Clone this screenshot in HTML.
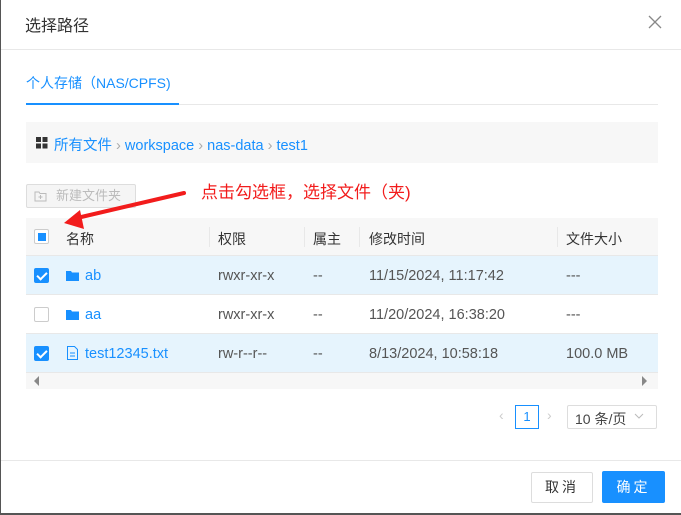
<!DOCTYPE html>
<html><head><meta charset="utf-8"><style>
*{box-sizing:border-box;margin:0;padding:0}
body{width:681px;height:515px;background:#fff;font-family:"Liberation Sans","Noto Sans CJK SC",sans-serif;font-size:14px;color:#333;position:relative;overflow:hidden;border-left:1px solid #555;border-bottom:2px solid #555}
.a{position:absolute}
.cb{position:absolute;width:15px;height:15px;border:1px solid #ccc;border-radius:2px;background:#fff}
.cb.on{background:#1890ff;border-color:#1890ff}
.cb.on:after{content:"";position:absolute;left:4px;top:1px;width:4px;height:8px;border:solid #fff;border-width:0 2px 2px 0;transform:rotate(45deg)}
.blue{color:#1890ff}
.row{position:absolute;left:25px;width:632px;height:39px;border-bottom:1px solid #e8e8e8;font-size:14.5px}
.row span{position:absolute;top:12px}
</style></head><body>
<div class="a" style="left:24px;top:12px;font-size:16px;color:#333">选择路径</div>
<svg class="a" style="left:647px;top:15px" width="14" height="14"><path d="M1 1L13 13M13 1L1 13" stroke="#888" stroke-width="1.3"/></svg>
<div class="a" style="left:0;top:49px;width:681px;height:1px;background:#e8e8e8"></div>
<div class="a blue" style="left:25px;top:73px;font-size:14px">个人存储（NAS/CPFS)</div>
<div class="a" style="left:25px;top:104px;width:632px;height:1px;background:#e8e8e8"></div>
<div class="a" style="left:25px;top:103px;width:153px;height:2px;background:#1890ff"></div>
<div class="a" style="left:25px;top:122px;width:632px;height:41px;background:#f7f7f7"></div>
<svg class="a" style="left:35px;top:137px" width="12" height="12"><rect x="0" y="0" width="5" height="5" fill="#333"/><rect x="6.5" y="0" width="5" height="5" fill="#333"/><rect x="0" y="6.5" width="5" height="5" fill="#333"/><rect x="6.5" y="6.5" width="5" height="5" fill="#333"/></svg>
<div class="a" style="left:53px;top:134px;font-size:14.5px"><span class="blue">所有文件</span> <span style="color:#aaa">›</span> <span class="blue">workspace</span> <span style="color:#aaa">›</span> <span class="blue">nas-data</span> <span style="color:#aaa">›</span> <span class="blue">test1</span></div>
<div class="a" style="left:25px;top:184px;width:110px;height:24px;border:1px solid #ddd;background:#f5f5f5;border-radius:2px;color:#bbb;font-size:13px;line-height:22px;padding-left:29px">新建文件夹</div>
<svg class="a" style="left:33px;top:190px" width="13" height="12"><path d="M1 2h4l1 1.5h6v7.5h-11z" fill="none" stroke="#bbb"/><path d="M6.5 5v4M4.5 7h4" stroke="#bbb"/></svg>
<div class="a" style="left:200px;top:178px;font-size:17px;color:#f21c1c">点击勾选框，选择文件（夹)</div>
<div class="a" style="left:25px;top:218px;width:632px;height:38px;background:#f7f7f7;border-bottom:1px solid #e8e8e8"></div>
<div class="cb" style="left:33px;top:229px"></div><div class="a" style="left:37px;top:233px;width:8px;height:8px;background:#1890ff"></div>
<div class="a" style="left:65px;top:229px">名称</div>
<div class="a" style="left:208px;top:227px;width:1px;height:20px;background:#e8e8e8"></div>
<div class="a" style="left:217px;top:229px">权限</div>
<div class="a" style="left:303px;top:227px;width:1px;height:20px;background:#e8e8e8"></div>
<div class="a" style="left:312px;top:229px">属主</div>
<div class="a" style="left:358px;top:227px;width:1px;height:20px;background:#e8e8e8"></div>
<div class="a" style="left:368px;top:229px">修改时间</div>
<div class="a" style="left:556px;top:227px;width:1px;height:20px;background:#e8e8e8"></div>
<div class="a" style="left:565px;top:229px">文件大小</div>
<svg class="a" style="left:0;top:0;z-index:5" width="681" height="300"><path d="M183 193L76 218" stroke="#f21c1c" stroke-width="4" stroke-linecap="round"/><path d="M63 223L79 210L83 229Z" fill="#f21c1c"/></svg>

<div class="row" style="top:256px;background:#e6f4fd"><div class="cb on" style="left:8px;top:12px"></div>
<svg class="a" style="left:40px;top:14px" width="13" height="11"><path d="M0 1h5l1 1.5h7v8.5h-13z" fill="#1890ff"/></svg>
<span class="blue" style="left:59px">ab</span><span style="left:192px;color:#555">rwxr-xr-x</span><span style="left:287px;color:#555">--</span><span style="left:343px;color:#555">11/15/2024, 11:17:42</span><span style="left:540px;color:#555">---</span></div>
<div class="row" style="top:295px"><div class="cb" style="left:8px;top:12px"></div>
<svg class="a" style="left:40px;top:14px" width="13" height="11"><path d="M0 1h5l1 1.5h7v8.5h-13z" fill="#1890ff"/></svg>
<span class="blue" style="left:59px">aa</span><span style="left:192px;color:#555">rwxr-xr-x</span><span style="left:287px;color:#555">--</span><span style="left:343px;color:#555">11/20/2024, 16:38:20</span><span style="left:540px;color:#555">---</span></div>
<div class="row" style="top:334px;background:#e6f4fd"><div class="cb on" style="left:8px;top:12px"></div>
<svg class="a" style="left:41px;top:12px" width="11" height="14"><path d="M0.5 0.5h7l3 3v10h-10z" fill="none" stroke="#1890ff"/><path d="M3 7h5M3 10h5" stroke="#1890ff"/></svg>
<span class="blue" style="left:59px">test12345.txt</span><span style="left:192px;color:#555">rw-r--r--</span><span style="left:287px;color:#555">--</span><span style="left:343px;color:#555">8/13/2024, 10:58:18</span><span style="left:540px;color:#555">100.0 MB</span></div>
<div class="a" style="left:25px;top:373px;width:632px;height:16px;background:#f7f7f7"></div>
<svg class="a" style="left:33px;top:376px" width="6" height="10"><path d="M5 0L0 5L5 10Z" fill="#888"/></svg>
<svg class="a" style="left:641px;top:376px" width="6" height="10"><path d="M0 0L5 5L0 10Z" fill="#888"/></svg>

<div class="a" style="left:498px;top:407px;color:#ccc;font-size:14px">‹</div>
<div class="a blue" style="left:514px;top:405px;width:24px;height:24px;border:1px solid #1890ff;text-align:center;line-height:22px;font-size:13px">1</div>
<div class="a" style="left:546px;top:407px;color:#ccc">›</div>
<div class="a" style="left:566px;top:405px;width:90px;height:24px;border:1px solid #ddd;border-radius:2px;padding:3px 0 0 7px;font-size:14px;color:#444">10 条/页</div>
<svg class="a" style="left:633px;top:413px" width="10" height="6"><path d="M1 1L5 5L9 1" fill="none" stroke="#bbb"/></svg>

<div class="a" style="left:0;top:460px;width:681px;height:1px;background:#e8e8e8"></div>
<div class="a" style="left:530px;top:472px;width:62px;height:31px;border:1px solid #ddd;border-radius:2px;text-align:center;line-height:29px;font-size:14px;letter-spacing:3px">取消</div>
<div class="a" style="left:601px;top:471px;width:63px;height:32px;background:#1890ff;border-radius:2px;text-align:center;line-height:32px;color:#fff;font-size:14px;letter-spacing:3px">确定</div>
</body></html>
